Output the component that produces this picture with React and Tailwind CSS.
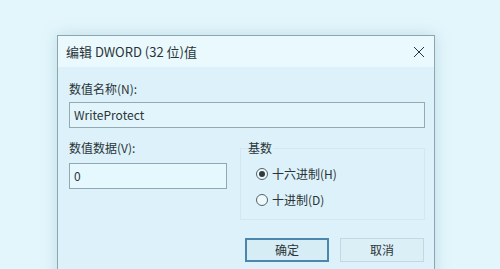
import React from "react";

export default function App() {
  return (
    <div className="w-[500px] h-[269px] overflow-hidden bg-[#e3f6fc] pl-[57px] pt-[35px] font-['Noto_Sans_CJK_SC',sans-serif] text-[#2a3438]">
      <div className="w-[378px] h-[260px] border border-[#8ea5ae] bg-[#dcf1f9] shadow-[0_0_14px_rgba(120,170,190,0.35)] flex flex-col">
        {/* title bar */}
        <div className="h-[31px] bg-[#e9f9fe] flex items-center justify-between pl-[8px] pr-[8px]">
          <span className="text-[13px] leading-none">编辑 DWORD (32 位)值</span>
          <svg width="12" height="12" viewBox="0 0 12 12" className="mr-[1px]">
            <path d="M1 1 L11 11 M11 1 L1 11" stroke="#2b3337" strokeWidth="1" fill="none" />
          </svg>
        </div>
        {/* body */}
        <div className="flex flex-col pl-[11px] pr-[9px]">
          <div className="mt-[13px] text-[12px] leading-[18px]">数值名称(N):</div>
          <div className="mt-[4px] h-[26px] border border-[#93aab3] bg-[#e2f5fc] flex items-center pl-[4px] text-[12px]">
            WriteProtect
          </div>
          <div className="flex mt-[11px]">
            <div className="w-[171px] flex flex-col">
              <div className="text-[12px] leading-[18px]">数值数据(V):</div>
              <div className="mt-[6px] w-[158px] h-[26px] border border-[#8fa8b1] bg-[#e5f8fe] flex items-center pl-[4px] text-[12px]">
                0
              </div>
            </div>
            <div className="flex-1 relative mt-[9px] h-[72px] border border-[#d2e7ef] flex flex-col pl-[15px] pt-[19px] gap-[14px]">
              <span className="absolute left-[7px] top-[-10px] text-[12px] leading-[18px] bg-[#dcf1f9] pr-[1px]">基数</span>
              <div className="flex items-center gap-[4px] text-[12px] leading-[12px]">
                <span className="w-[12px] h-[12px] rounded-full border border-[#56636a] bg-[#eef9fc] flex items-center justify-center">
                  <span className="w-[6px] h-[6px] rounded-full bg-[#2f3a3f]"></span>
                </span>
                <span>十六进制(H)</span>
              </div>
              <div className="flex items-center gap-[4px] text-[12px] leading-[12px]">
                <span className="w-[12px] h-[12px] rounded-full border border-[#56636a] bg-[#eef9fc]"></span>
                <span>十进制(D)</span>
              </div>
            </div>
          </div>
          <div className="flex justify-end gap-[11px] mt-[18px] pr-[1px]">
            <div className="w-[84px] h-[24px] border-2 border-[#4c86ad] bg-[#d6edf6] flex items-center justify-center text-[12px]">
              确定
            </div>
            <div className="w-[84px] h-[24px] border border-[#c3d8e0] bg-[#dbeff6] flex items-center justify-center text-[12px]">
              取消
            </div>
          </div>
        </div>
      </div>
    </div>
  );
}
